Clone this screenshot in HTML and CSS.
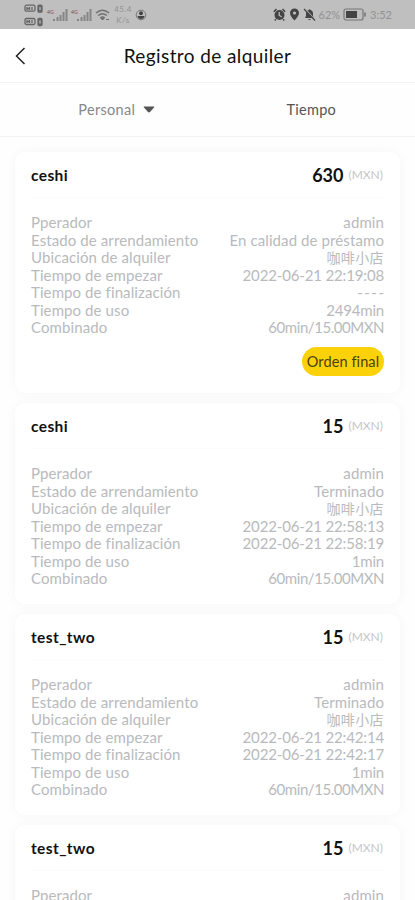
FILE: index.html
```html
<!DOCTYPE html>
<html lang="es">
    <head>
        <meta charset="UTF-8" />
        <meta name="viewport" content="width=device-width, initial-scale=1.0" />
        <title>Registro de alquiler</title>
        <link rel="stylesheet" href="styles.css">
    </head>
    <body>
        <div class="status-bar">
            <div class="status-left">
                <svg width="20" height="24" viewBox="0 0 20 24" fill="none" stroke="#666" stroke-width="1.3">
                    <rect x="1" y="2.2" width="10" height="6" rx="1.5" />
                    <path d="M3 4v3M3 5.5h2.5M5.5 4v3M8 4v3" />
                    <rect x="14" y="2.2" width="4" height="7" rx="1" fill="#666" />
                    <path d="M16 4v3" stroke="#bbb" />
                    <rect x="1" y="15.5" width="10" height="6" rx="1.5" />
                    <path d="M3 17v3M3 18.5h2.5M5.5 17v3M8 17v3" />
                    <rect x="14" y="15.5" width="4" height="7" rx="1" fill="#666" />
                    <path d="M16 17.5v3" stroke="#bbb" />
                </svg>
                <div class="signal">
                    <span class="network">4G</span>
                    <svg width="15" height="12" viewBox="0 0 15 12" fill="#858585">
                        <path d="M0 10h2v2H0zM3.5 8h2v4h-2zM6.5 6h2v6h-2zM9.5 3h2v9h-2zM12.5 0h2v12h-2z" />
                    </svg>
                </div>
                <div class="signal">
                    <span class="network">4G</span>
                    <svg width="15" height="12" viewBox="0 0 15 12" fill="#858585">
                        <path d="M0 10h2v2H0zM3.5 8h2v4h-2zM6.5 6h2v6h-2zM9.5 3h2v9h-2zM12.5 0h2v12h-2z" />
                    </svg>
                </div>
                <svg class="wifi" width="15" height="12" viewBox="0 0 15 12" fill="none" stroke="#707070" stroke-width="1.5">
                    <path d="M1 4Q7.5-1.5 14 4M3.2 6.5Q7.5 3 11.8 6.5M5.3 9Q7.5 7 9.7 9" />
                    <path d="M7.5 11l-1.5-1.5h3zM11 10.5h3" stroke-width="1" fill="#666" />
                </svg>
                <div class="speed">45.4<br>K/s</div>
                <svg class="account" width="12" height="12" viewBox="0 0 12 12">
                    <circle cx="6" cy="6" r="4.8" fill="none" stroke="#777" />
                    <circle cx="6" cy="4.2" r="2" fill="#444" />
                    <path d="M2.5 7h7q-.5 3-3.5 3t-3.5-3z" fill="#444" />
                </svg>
            </div>
            <div class="status-right">
                <svg width="13" height="13" viewBox="0 0 13 13">
                    <circle cx="6.5" cy="7" r="5" fill="#444" />
                    <path d="M.8 3.8L3.5 1M12.2 3.8L9.5 1M2.8 11.2l-1 1.3M10.2 11.2l1 1.3" stroke="#444" stroke-width="1.5" />
                    <path d="M6.2 4v3.5l2.5 1.3" fill="none" stroke="#bfbfbf" stroke-width="1.2" />
                </svg>
                <svg width="11" height="13" viewBox="0 0 11 13">
                    <path d="M5.5.5a4.5 4.5 0 0 1 4.5 4.5c0 3-4.5 7.5-4.5 7.5S1 8 1 5A4.5 4.5 0 0 1 5.5.5z" fill="#444" />
                    <circle cx="5.5" cy="5" r="1.6" fill="#bfbfbf" />
                </svg>
                <svg width="13" height="13" viewBox="0 0 13 13">
                    <path d="M2 10l1-2V5a3.5 3.5 0 0 1 2.7-3.3 1 1 0 0 1 1.6 0A3.5 3.5 0 0 1 10 5v3l1 2zM5 11h3q-1.5 2-3 0z" fill="#444" />
                    <path d="M1.8.5l10.500 11.700" stroke="#bfbfbf" stroke-width="1.2" />
                    <path d="M1 1l11 11.5" stroke="#444" stroke-width="1.2" />
                </svg>
                <span class="battery-level">62%</span>
                <svg width="24" height="13" viewBox="0 0 24 13">
                    <rect x="1" y="1" width="19" height="11" rx="2" fill="none" stroke="#777" stroke-width="1.2" />
                    <rect x="3" y="3" width="11" height="7" fill="#444" />
                    <path d="M22 4.5v4" stroke="#777" stroke-width="1.6" />
                </svg>
                <span class="clock">3:52</span>
            </div>
        </div>

        <header class="header">
            <svg class="back" width="12" height="18" viewBox="0 0 12 18" fill="none" stroke="#222" stroke-width="1.5">
                <path d="M10.500 1L2.500 9l8 8" />
            </svg>
            <h1>Registro de alquiler</h1>
        </header>

        <nav class="filters">
            <div class="filter muted">
                <span>Personal</span>
                <svg width="12" height="7" viewBox="0 0 12 7" fill="#555">
                    <path d="M1 .5h10q.7.3 0 1L7 6q-1 .8-2 0L1 1.5q-.7-.7 0-1z" />
                </svg>
            </div>
            <div class="filter">Tiempo</div>
        </nav>

        <main class="list">
            <section class="card">
                <div class="card-head">
                    <h2>ceshi</h2>
                    <div class="price"><b>630</b><span>(MXN)</span></div>
                </div>
                <dl class="details">
                    <dt>Pperador</dt><dd>admin</dd>
                    <dt>Estado de arrendamiento</dt><dd>En calidad de préstamo</dd>
                    <dt>Ubicación de alquiler</dt><dd class="place">咖啡小店</dd>
                    <dt>Tiempo de empezar</dt><dd class="time">2022-06-21 22:19:08</dd>
                    <dt>Tiempo de finalización</dt><dd class="empty">----</dd>
                    <dt>Tiempo de uso</dt><dd class="used">2494min</dd>
                    <dt>Combinado</dt><dd class="plan">60min/15.00MXN</dd>
                </dl>
                <button class="finish">Orden final</button>
            </section>

            <section class="card">
                <div class="card-head">
                    <h2>ceshi</h2>
                    <div class="price"><b>15</b><span>(MXN)</span></div>
                </div>
                <dl class="details">
                    <dt>Pperador</dt><dd>admin</dd>
                    <dt>Estado de arrendamiento</dt><dd>Terminado</dd>
                    <dt>Ubicación de alquiler</dt><dd class="place">咖啡小店</dd>
                    <dt>Tiempo de empezar</dt><dd class="time">2022-06-21 22:58:13</dd>
                    <dt>Tiempo de finalización</dt><dd class="time">2022-06-21 22:58:19</dd>
                    <dt>Tiempo de uso</dt><dd class="used">1min</dd>
                    <dt>Combinado</dt><dd class="plan">60min/15.00MXN</dd>
                </dl>
            </section>

            <section class="card">
                <div class="card-head">
                    <h2>test_two</h2>
                    <div class="price"><b>15</b><span>(MXN)</span></div>
                </div>
                <dl class="details">
                    <dt>Pperador</dt><dd>admin</dd>
                    <dt>Estado de arrendamiento</dt><dd>Terminado</dd>
                    <dt>Ubicación de alquiler</dt><dd class="place">咖啡小店</dd>
                    <dt>Tiempo de empezar</dt><dd class="time">2022-06-21 22:42:14</dd>
                    <dt>Tiempo de finalización</dt><dd class="time">2022-06-21 22:42:17</dd>
                    <dt>Tiempo de uso</dt><dd class="used">1min</dd>
                    <dt>Combinado</dt><dd class="plan">60min/15.00MXN</dd>
                </dl>
            </section>

            <section class="card">
                <div class="card-head">
                    <h2>test_two</h2>
                    <div class="price"><b>15</b><span>(MXN)</span></div>
                </div>
                <dl class="details">
                    <dt>Pperador</dt><dd>admin</dd>
                </dl>
            </section>
        </main>
    </body>
</html>
```

FILE: styles.css
```css
* {
    box-sizing: border-box;
}

body {
    margin: 0;
    height: 900px;
    display: flex;
    flex-direction: column;
    overflow: hidden;
    background-color: #fefefe;
    color: #111;
    font-family: Lato, "Noto Sans CJK SC", sans-serif;
}

h1,
h2,
dl,
dd {
    margin: 0;
}

.status-bar {
    flex: none;
    height: 29px;
    padding: 0 23px 0 24px;
    display: flex;
    justify-content: space-between;
    align-items: center;
    background-color: #bfbfbf;
    color: #929292;
    font-size: 11px;
}

.status-left,
.status-right {
    display: flex;
    align-items: center;
}

.status-left {
    gap: 3px;
}

.status-right {
    gap: 3px;
}

.signal {
    display: flex;
    align-items: flex-end;
    height: 12px;
}

.network {
    align-self: flex-start;
    width: 6px;
    font-size: 5px;
    line-height: 6px;
    color: #555;
}

.speed {
    width: 20px;
    font-size: 8px;
    line-height: 11px;
    text-align: center;
    letter-spacing: 0.4px;
}

.account {
    margin-left: -1px;
}

.header {
    flex: none;
    height: 53px;
    padding: 0 14px;
    display: grid;
    grid-template-columns: 12px 1fr 12px;
    align-items: center;
    background-color: #fff;
}

.header h1 {
    font-size: 19px;
    font-weight: 400;
    text-align: center;
    letter-spacing: 0.4px;
}

.filters {
    flex: none;
    height: 55px;
    display: grid;
    grid-template-columns: 1fr 1fr;
    border-top: 1px solid #f3f3f3;
    border-bottom: 1px solid #f3f3f3;
    font-size: 14.5px;
    letter-spacing: 0.3px;
    color: #555;
}

.filter {
    display: flex;
    align-items: center;
    justify-content: center;
    gap: 8px;
}

.filter.muted {
    padding-left: 26px;
    color: #888;
}

.list {
    flex: 1;
    padding: 15px 15px 0;
    display: flex;
    flex-direction: column;
    gap: 10.5px;
}

.card {
    flex: none;
    padding: 0 16px 16px;
    display: flex;
    flex-direction: column;
    border-radius: 10px;
    background-color: #fff;
    box-shadow: 0 0 12px rgba(0, 0, 0, 0.04);
}

.card-head {
    height: 46px;
    display: flex;
    align-items: center;
    justify-content: space-between;
    border-bottom: 1px solid #fcfcfc;
}

.card-head h2 {
    font-size: 15.5px;
    font-weight: 700;
    letter-spacing: 0.4px;
}

.price {
    display: flex;
    align-items: center;
    gap: 5px;
    padding-right: 1px;
}

.price b {
    font-size: 18px;
    font-weight: 700;
}

.price span {
    font-size: 12px;
    color: #c4c6c9;
}

.details {
    margin-top: 16px;
    display: grid;
    grid-template-columns: auto auto;
    grid-auto-rows: 17.5px;
    justify-content: space-between;
    font-size: 15px;
    line-height: 17.5px;
    letter-spacing: 0.1px;
    color: #b8babd;
}

.details dd {
    text-align: right;
    white-space: nowrap;
}

.details .place {
    font-size: 14px;
    letter-spacing: 0.4px;
}

.details .time {
    letter-spacing: -0.15px;
}

.details .empty {
    letter-spacing: 1.5px;
    margin-right: -1.5px;
}

.details .used {
    letter-spacing: -0.2px;
}

.details .plan {
    letter-spacing: -0.45px;
}

.finish {
    align-self: flex-end;
    width: 82px;
    height: 29px;
    margin: 10px 0 1px;
    padding: 0;
    border: none;
    border-radius: 15px;
    background-color: #fbd10a;
    color: #4a410f;
    font: inherit;
    font-size: 14.5px;
    letter-spacing: 0.1px;
}
```
